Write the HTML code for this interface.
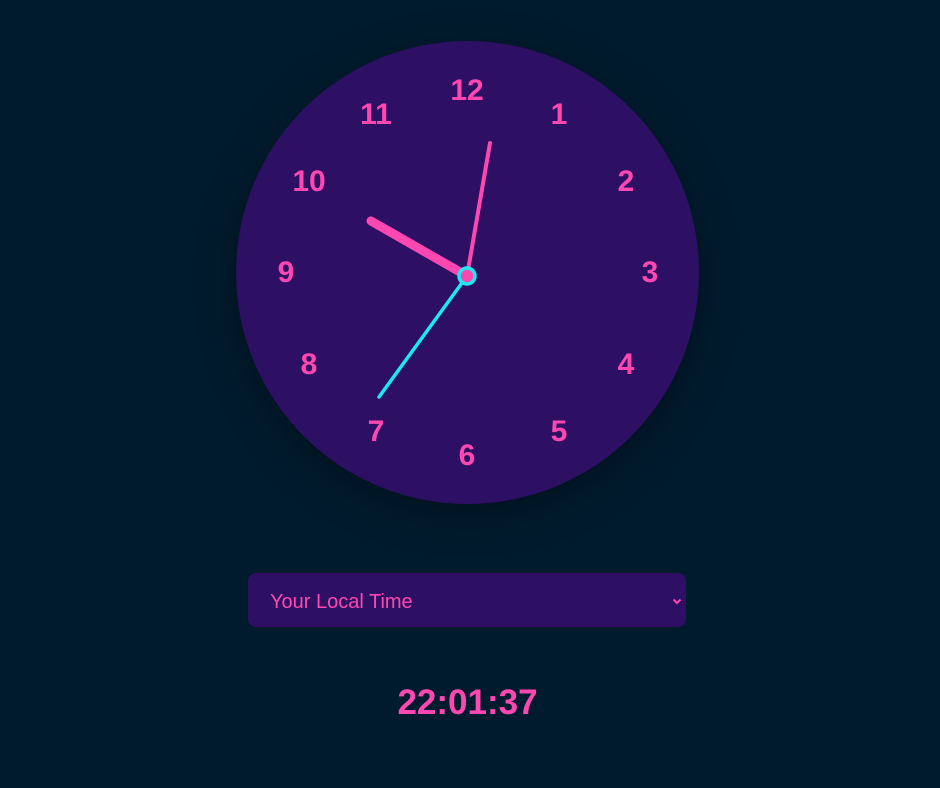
<!DOCTYPE html>
<html><head><style>
html,body{margin:0;padding:0;background:#001b2e;width:940px;height:788px;overflow:hidden;font-family:"Liberation Sans",sans-serif}
.n{position:absolute;color:#ff47b2;font-weight:bold;font-size:30px;transform:translate(-50%,-50%)}
</style></head><body>
<div style="position:absolute;left:236px;top:41px;width:463px;height:463px;border-radius:50%;background:#2d0f63;box-shadow:0 10px 40px rgba(0,0,0,0.35)"></div>
<div class="n" style="left:467px;top:91px">12</div>
<div class="n" style="left:559px;top:115px">1</div>
<div class="n" style="left:626px;top:182px">2</div>
<div class="n" style="left:650px;top:273px">3</div>
<div class="n" style="left:626px;top:365px">4</div>
<div class="n" style="left:559px;top:432px">5</div>
<div class="n" style="left:467px;top:456px">6</div>
<div class="n" style="left:376px;top:432px">7</div>
<div class="n" style="left:309px;top:365px">8</div>
<div class="n" style="left:286px;top:273px">9</div>
<div class="n" style="left:309px;top:182px">10</div>
<div class="n" style="left:376px;top:115px">11</div>
<svg width="940" height="788" style="position:absolute;left:0;top:0">
<line x1="467" y1="276" x2="371" y2="221" stroke="#ff47b2" stroke-width="9" stroke-linecap="round"/>
<line x1="467" y1="276" x2="490" y2="143" stroke="#ff47b2" stroke-width="4" stroke-linecap="round"/>
<line x1="467" y1="276" x2="379" y2="397" stroke="#1ee8f0" stroke-width="3.5" stroke-linecap="round"/>
<circle cx="467" cy="276" r="8" fill="#ff47b2" stroke="#1ee8f0" stroke-width="3.5"/>
</svg>
<div style="position:absolute;left:248px;top:573px;width:438px;height:54px;background:#2d0f63;border-radius:8px"></div>
<div style="position:absolute;left:270px;top:591px;color:#ff47b2;font-size:20px">Your Local Time</div>
<svg width="10" height="7" style="position:absolute;left:672px;top:598px"><path d="M1.5 1.5L5 5L8.5 1.5" fill="none" stroke="#ff47b2" stroke-width="2"/></svg>
<div style="position:absolute;left:0;width:935px;top:683px;text-align:center;color:#ff47b2;font-weight:bold;font-size:35px">22:01:37</div>
</body></html>
